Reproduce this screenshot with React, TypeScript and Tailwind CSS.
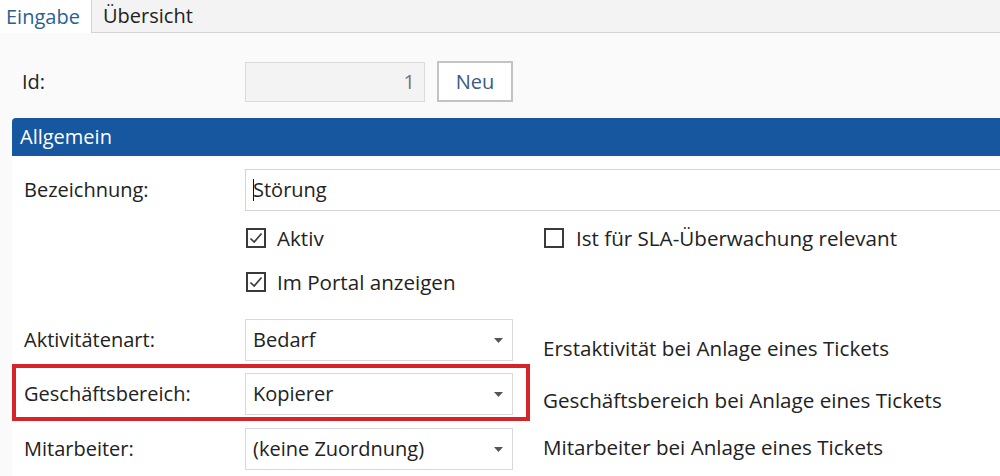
import React from "react";

const font = { fontFamily: '"Open Sans", "Noto Sans", Arial, sans-serif' };

function Check({ checked }: { checked: boolean }) {
  return (
    <span className="flex h-[20px] w-[20px] shrink-0 items-center justify-center border-2 border-[#3a3a3a] bg-white">
      {checked && (
        <svg width="14" height="12" viewBox="0 0 14 12">
          <path d="M1.5 6.5 L5.2 10 L12.5 1.5" fill="none" stroke="#3a3a3a" strokeWidth="1.7" />
        </svg>
      )}
    </span>
  );
}

function Select({ value }: { value: string }) {
  return (
    <div className="flex h-[42px] w-[268px] shrink-0 items-center justify-between border border-[#d9d9d9] bg-white pl-[7px] pr-[9px] text-[#222]">
      <span>{value}</span>
      <svg width="9" height="5" viewBox="0 0 9 5">
        <path d="M0 0 H9 L4.5 5 Z" fill="#555" />
      </svg>
    </div>
  );
}

export default function App() {
  return (
    <div
      className="relative h-[476px] w-[1000px] overflow-hidden bg-[#fafafa] text-[20px] leading-[24px] text-[#222]"
      style={font}
    >
      {/* Tabs */}
      <div className="flex h-[33px]">
        <div className="flex w-[91px] items-center bg-white pl-[6px] text-[#2b5f95]">Eingabe</div>
        <div className="flex flex-1 items-center border-b border-l border-[#d4d4d4] bg-[#f3f3f3] pl-[11px] text-[#222]">
          Übersicht
        </div>
      </div>

      {/* Id row */}
      <div className="mt-[28px] flex items-center pl-[22px]">
        <div className="w-[223px]">Id:</div>
        <div className="flex h-[40px] w-[180px] items-center justify-end border border-[#dadada] bg-[#f3f3f3] pr-[9px] text-[#777]">
          1
        </div>
        <button className="ml-[12px] h-[41px] w-[76px] border-2 border-[#c3c3c3] bg-white text-[#3b5b82]">
          Neu
        </button>
      </div>

      {/* Header */}
      <div className="ml-[12px] mt-[16px] flex h-[38px] items-center rounded-tl-[4px] bg-[#1657a0] pl-[8px] text-[20px] text-white">
        Allgemein
      </div>

      {/* Form */}
      <div className="relative ml-[12px] bg-white pb-[20px]">
        <div className="flex items-center pt-[13px]">
          <div className="w-[233px] pl-[12px]">Bezeichnung:</div>
          <div className="flex h-[42px] flex-1 items-center border border-r-0 border-[#d4d4d4] bg-white pl-[7px]">
            <span className="mr-[-1px] h-[22px] w-[1px] bg-[#111]" />
            Störung
          </div>
        </div>

        <div className="mt-[15px] flex h-[24px] pl-[234px] text-[20.6px]">
          <label className="flex w-[298px] items-center gap-[11px]">
            <Check checked />
            Aktiv
          </label>
          <label className="flex items-center gap-[12px]">
            <Check checked={false} />
            Ist für SLA-Überwachung relevant
          </label>
        </div>
        <div className="mt-[20px] flex h-[24px] pl-[234px] text-[20.6px]">
          <label className="flex items-center gap-[11px]">
            <Check checked />
            Im Portal anzeigen
          </label>
        </div>

        <div className="mt-[25px] flex items-center">
          <div className="w-[233px] pl-[12px]">Aktivitätenart:</div>
          <Select value="Bedarf" />
          <div className="ml-[30px] mt-[16px] whitespace-nowrap text-[20.6px]">Erstaktivität bei Anlage eines Tickets</div>
        </div>

        <div className="mt-[12px] flex items-center">
          <div className="w-[233px] pl-[12px]">Geschäftsbereich:</div>
          <Select value="Kopierer" />
          <div className="ml-[30px] mt-[12px] whitespace-nowrap text-[20.6px]">Geschäftsbereich bei Anlage eines Tickets</div>
        </div>

        <div className="mt-[13px] flex items-center">
          <div className="w-[233px] pl-[12px]">Mitarbeiter:</div>
          <Select value="(keine Zuordnung)" />
          <div className="ml-[30px] mt-[-4px] whitespace-nowrap text-[20.6px]">Mitarbeiter bei Anlage eines Tickets</div>
        </div>
      </div>

      {/* Annotation box */}
      <div className="pointer-events-none absolute left-[12px] top-[364px] h-[57px] w-[518px] border-[4px] border-[#d5242a]" />
    </div>
  );
}
